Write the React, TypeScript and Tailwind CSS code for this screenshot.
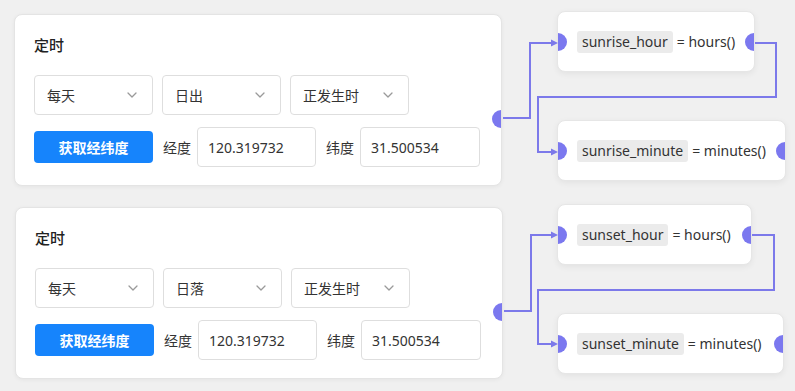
import React from "react";

const font = { fontFamily: '"Noto Sans", "Noto Sans CJK SC", sans-serif' };

function Chevron() {
  return (
    <svg width="10" height="6" viewBox="0 0 10 6" fill="none">
      <path d="M1 1L5 5L9 1" stroke="#9a9a9a" strokeWidth="1.3" strokeLinecap="round" strokeLinejoin="round" />
    </svg>
  );
}

function Select({ label }: { label: string }) {
  return (
    <div className="flex h-[40px] w-[119px] items-center justify-between rounded-[4px] border border-[#dedede] bg-white pl-[12px] pr-[15px]">
      <span className="text-[14px] text-[#333]">{label}</span>
      <Chevron />
    </div>
  );
}

function Input({ value, w }: { value: string; w: string }) {
  return (
    <div className={`flex h-[40px] ${w} items-center rounded-[4px] border border-[#dedede] bg-white pl-[10px]`}>
      <span className="text-[14px] text-[#333]">{value}</span>
    </div>
  );
}

function Card({ pos, event }: { pos: string; event: string }) {
  return (
    <div
      className={`absolute ${pos} h-[172px] w-[488px] overflow-hidden rounded-[8px] border border-[#e4e4e4] bg-white px-[19px] pt-[19px] shadow-[0_1px_4px_rgba(0,0,0,0.05)]`}
    >
      <div className="h-[22px] text-[15px] font-medium leading-[22px] text-[#222]">定时</div>
      <div className="mt-[19px] flex gap-[9px]">
        <Select label="每天" />
        <Select label={event} />
        <Select label="正发生时" />
      </div>
      <div className="mt-[12px] flex items-center">
        <button className="h-[32px] w-[119px] rounded-[4px] bg-[#1684fc] text-[14px] font-bold text-white">
          获取经纬度
        </button>
        <span className="ml-[10px] mr-[6px] text-[14px] text-[#333]">经度</span>
        <Input value="120.319732" w="w-[119px]" />
        <span className="ml-[10px] mr-[6px] text-[14px] text-[#333]">纬度</span>
        <Input value="31.500534" w="w-[120px]" />
      </div>
      <div className="absolute right-[-9px] top-[95px] h-[18px] w-[18px] rounded-full bg-[#7b78ef]" />
    </div>
  );
}

function Node({ pos, name, fn }: { pos: string; name: string; fn: string }) {
  return (
    <div
      className={`absolute ${pos} flex h-[61px] items-center overflow-hidden rounded-[8px] border border-[#e6e6e6] bg-white pl-[19px] shadow-[0_2px_6px_rgba(0,0,0,0.06)]`}
    >
      <div className="absolute left-[-9px] top-1/2 h-[18px] w-[18px] -translate-y-1/2 rounded-full bg-[#7b78ef]" />
      <span className="rounded-[3px] bg-[#ebebeb] px-[5px] text-[14px] leading-[22px] text-[#333]">{name}</span>
      <span className="ml-[4px] text-[14px] text-[#333]">= {fn}</span>
      <div className="absolute right-[-9px] top-1/2 h-[18px] w-[18px] -translate-y-1/2 rounded-full bg-[#7b78ef]" />
    </div>
  );
}

export default function App() {
  const stroke = "#7c79ea";
  const arrow = (x: number, y: number) => `M${x - 7} ${y - 3.5} L${x} ${y} L${x - 7} ${y + 3.5} Z`;
  return (
    <div className="relative h-[391px] w-[795px] overflow-hidden bg-[#f0f0f0]" style={font}>
      <Card pos="left-[14px] top-[14px]" event="日出" />
      <Card pos="left-[15px] top-[207px]" event="日落" />

      <Node pos="left-[557px] top-[11px] w-[198px]" name="sunrise_hour" fn="hours()" />
      <Node pos="left-[557px] top-[120px] w-[229px]" name="sunrise_minute" fn="minutes()" />
      <Node pos="left-[557px] top-[204px] w-[195px]" name="sunset_hour" fn="hours()" />
      <Node pos="left-[557px] top-[313px] w-[227px]" name="sunset_minute" fn="minutes()" />

      <svg className="pointer-events-none absolute left-0 top-0" width="795" height="391" viewBox="0 0 795 391">
        <g fill="none" stroke={stroke} strokeWidth="2">
          <path d="M503 118 H530 V43 H552" />
          <path d="M755 43 H776 V97 H538 V152 H552" />
          <path d="M504 311 H531 V235 H552" />
          <path d="M752 235 H774 V290 H538 V344 H552" />
        </g>
        <g fill={stroke}>
          <path d={arrow(558, 43)} />
          <path d={arrow(558, 152)} />
          <path d={arrow(558, 235)} />
          <path d={arrow(558, 344)} />
        </g>
      </svg>
    </div>
  );
}
